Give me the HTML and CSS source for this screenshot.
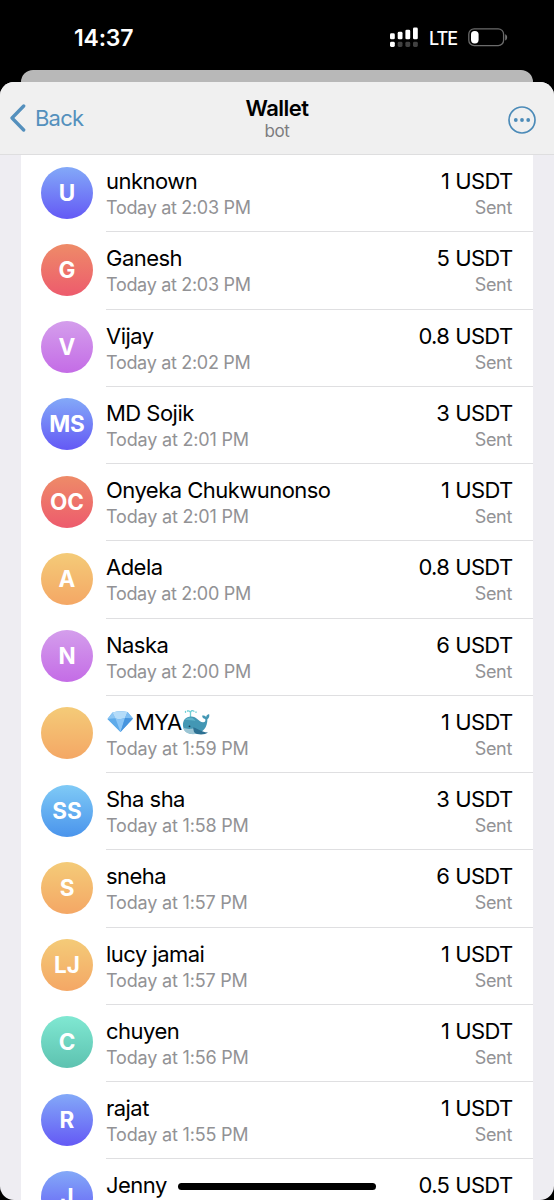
FILE: index.html
```html
<!DOCTYPE html>
<html lang="en">
<head>
<meta charset="utf-8">
<title>Wallet</title>
<link rel="stylesheet" href="styles.css">
</head>
<body>
<div class="phone">
  <header class="status">
    <span class="clock">14:37</span>
    <svg class="signal" width="30" height="22" viewBox="0 0 30 22" fill="#fff">
      <rect x="0" y="7.3" width="4.8" height="6" rx="1.4"/><rect x="7.7" y="5.8" width="4.8" height="7.5" rx="1.4"/><rect x="15.4" y="3.7" width="4.8" height="9.6" rx="1.4"/><rect x="23" y="1.5" width="4.8" height="11.8" rx="1.4"/>
      <rect x="0" y="15.8" width="4.8" height="5.2" rx="1.4"/>
      <g fill="#414141"><rect x="7.7" y="15.8" width="4.8" height="5.2" rx="1.4"/><rect x="15.4" y="15.8" width="4.8" height="5.2" rx="1.4"/><rect x="23" y="15.8" width="4.8" height="5.2" rx="1.4"/></g>
    </svg>
    <span class="network">LTE</span>
    <svg class="battery" width="42" height="20" viewBox="0 0 42 20">
      <rect x="1.8" y="1.8" width="34.8" height="16.8" rx="5.4" fill="none" stroke="#6b6b6b" stroke-width="1.3"/>
      <rect x="4" y="4" width="7.6" height="12.4" rx="3.6" fill="#fff"/>
      <path d="M38.2 7.2c2.6.9 2.6 5.3 0 6.2z" fill="#757575"/>
    </svg>
  </header>
  <div class="backcard"></div>
  <main class="sheet">
    <nav class="nav">
      <a class="back"><svg width="17" height="28" viewBox="0 0 17 28"><path d="M14.7 2 3 14l11.7 12" fill="none" stroke="#5490bd" stroke-width="3.3" stroke-linecap="round" stroke-linejoin="round"/></svg><span>Back</span></a>
      <div class="heading"><h1>Wallet</h1><p>bot</p></div>
      <svg class="more" width="30" height="30" viewBox="0 0 30 30"><circle cx="15" cy="15" r="13" fill="none" stroke="#4c8bb8" stroke-width="1.7"/><g fill="#4c8bb8"><circle cx="8.8" cy="15" r="1.9"/><circle cx="15" cy="15" r="1.9"/><circle cx="21.2" cy="15" r="1.9"/></g></svg>
    </nav>
    <div class="list">
      <div class="row"><div class="avatar indigo">U</div><div class="body"><div><p class="name">unknown</p><p class="sub">Today at 2:03 PM</p></div><div class="end"><p class="amount">1 USDT</p><p class="sub">Sent</p></div></div></div>
      <div class="row"><div class="avatar red">G</div><div class="body"><div><p class="name">Ganesh</p><p class="sub">Today at 2:03 PM</p></div><div class="end"><p class="amount">5 USDT</p><p class="sub">Sent</p></div></div></div>
      <div class="row"><div class="avatar violet">V</div><div class="body"><div><p class="name">Vijay</p><p class="sub">Today at 2:02 PM</p></div><div class="end"><p class="amount">0.8 USDT</p><p class="sub">Sent</p></div></div></div>
      <div class="row"><div class="avatar indigo">MS</div><div class="body"><div><p class="name">MD Sojik</p><p class="sub wide">Today at 2:01 PM</p></div><div class="end"><p class="amount">3 USDT</p><p class="sub">Sent</p></div></div></div>
      <div class="row"><div class="avatar red">OC</div><div class="body"><div><p class="name">Onyeka Chukwunonso</p><p class="sub wide">Today at 2:01 PM</p></div><div class="end"><p class="amount">1 USDT</p><p class="sub">Sent</p></div></div></div>
      <div class="row"><div class="avatar orange">A</div><div class="body"><div><p class="name">Adela</p><p class="sub">Today at 2:00 PM</p></div><div class="end"><p class="amount">0.8 USDT</p><p class="sub">Sent</p></div></div></div>
      <div class="row"><div class="avatar violet">N</div><div class="body"><div><p class="name">Naska</p><p class="sub">Today at 2:00 PM</p></div><div class="end"><p class="amount">6 USDT</p><p class="sub">Sent</p></div></div></div>
      <div class="row"><div class="avatar orange"></div><div class="body"><div><p class="name emoji-name">
        <svg width="29" height="26" viewBox="0 0 29 26"><path d="M6.5 3.5Q14 1.5 21.5 3L27 9.5 14.5 23 1.500 10z" fill="#5ba9ea"/><path d="M6.5 3.5 9.5 9.5 1.5 10z" fill="#8cc6f4"/><path d="M6.5 3.5Q14 1.5 21.5 3L19 9Q14 11 9.5 9.5z" fill="#b5dcf9"/><path d="M21.5 3 27 9.5 19 9z" fill="#7dbdf2"/><path d="M9.5 9.5 14.5 23 1.5 10z" fill="#5fabea"/><path d="M9.5 9.5Q14 11 19 9L14.5 23z" fill="#8ac5f6"/><path d="M19 9 27 9.5 14.5 23z" fill="#4694de"/></svg><span>MYA</span><svg class="whale" width="28" height="28" viewBox="0 0 28 28">
          <g fill="none" stroke="#6fcfd6" stroke-width="1.3" stroke-linecap="round"><path d="M8.5 9V4.5Q7.500 2.500 5.5 3M8.5 4.5Q9.5 1.5 12 3.2"/><path d="M3.5 3.5v.8M14 3.8v.6"/></g>
          <path d="M1 18C.5 12 4 8.500 9 8.5c6 0 7.500 5.500 12 5.800 2.300.1 2.700-1.800 2.200-3.300-2.200-.5-3.200-2-3-3.500 2 0 3.100.4 3.900 1.400.4-1.500 1.400-2.500 3-2.900.6 2.500 0 4-1.700 5.300C25.500 19 21 25.500 13 26 6 26.400 1.500 23.500 1 18z" fill="#4397b4"/>
          <path d="M3 12C5.5 8.500 11 8.500 13.500 13c-3-1-7-1-10.500-1z" fill="#5fb4ca"/>
          <path d="M1.2 19.500c3.500 1.800 8 1.800 10.500.5 1 2.500 2 4.500 3.800 5.500C9 27.500 2 25 1.200 19.500z" fill="#9bc5d4"/>
          <path d="M11 19.500c5 .5 7 4.500 15 5-3 2.500-11 3-14-.5z" fill="#2d7193"/><circle cx="7.5" cy="18.3" r=".9" fill="#163a50"/></svg></p><p class="sub wide">Today at 1:59 PM</p></div><div class="end"><p class="amount">1 USDT</p><p class="sub">Sent</p></div></div></div>
      <div class="row"><div class="avatar blue">SS</div><div class="body"><div><p class="name">Sha sha</p><p class="sub wide">Today at 1:58 PM</p></div><div class="end"><p class="amount">3 USDT</p><p class="sub">Sent</p></div></div></div>
      <div class="row"><div class="avatar orange">S</div><div class="body"><div><p class="name">sneha</p><p class="sub wide">Today at 1:57 PM</p></div><div class="end"><p class="amount">6 USDT</p><p class="sub">Sent</p></div></div></div>
      <div class="row"><div class="avatar orange">LJ</div><div class="body"><div><p class="name">lucy jamai</p><p class="sub wide">Today at 1:57 PM</p></div><div class="end"><p class="amount">1 USDT</p><p class="sub">Sent</p></div></div></div>
      <div class="row"><div class="avatar teal">C</div><div class="body"><div><p class="name">chuyen</p><p class="sub wide">Today at 1:56 PM</p></div><div class="end"><p class="amount">1 USDT</p><p class="sub">Sent</p></div></div></div>
      <div class="row"><div class="avatar indigo">R</div><div class="body"><div><p class="name">rajat</p><p class="sub wide">Today at 1:55 PM</p></div><div class="end"><p class="amount">1 USDT</p><p class="sub">Sent</p></div></div></div>
      <div class="row"><div class="avatar indigo">J</div><div class="body"><div><p class="name">Jenny</p></div><div class="end"><p class="amount">0.5 USDT</p></div></div></div>
    </div>
  </main>
  <div class="home"></div>
</div>
</body>
</html>
```
FILE: styles.css
```css
* { box-sizing: border-box; }
body { margin: 0; background: #000; font-family: Inter, "Liberation Sans", sans-serif; color: #000; }
p, h1 { margin: 0; }
svg { display: block; flex: none; }
.phone { position: relative; width: 554px; height: 1200px; overflow: hidden; display: flex; flex-direction: column; }
.status { height: 69.5px; flex: none; display: flex; align-items: flex-start; color: #fff; padding-left: 74px; }
.clock { width: 316px; font-size: 23px; line-height: 26px; font-weight: 600; padding-top: 25px; letter-spacing: -0.2px; }
.signal { margin-top: 26px; }
.network { width: 38px; margin-left: 9px; font-size: 18px; line-height: 22px; font-weight: 500; padding-top: 28px; letter-spacing: -1px; }
.battery { margin-top: 27px; }
.backcard { height: 12.5px; flex: none; margin: 0 21px; background: #b8b8b8; border-radius: 12px 12px 0 0; }
.sheet { flex: 1; min-height: 0; display: flex; flex-direction: column; overflow: hidden; background: #eeedf2; border-radius: 14px; }
.nav { height: 73px; flex: none; display: grid; grid-template-columns: 1fr auto 1fr; background: #f0f0f0; border-bottom: 1px solid #dededf; }
.back { display: flex; align-items: center; gap: 9px; padding-left: 9px; color: #5490bd; font-size: 22px; letter-spacing: -0.8px; }
.heading { text-align: center; padding-top: 12px; }
.heading h1 { font-size: 22px; line-height: 28px; font-weight: 600; letter-spacing: -0.5px; }
.heading p { font-size: 17px; line-height: 19px; color: #7d7d7f; letter-spacing: -0.4px; }
.more { justify-self: end; align-self: center; margin: 3px 17px 0 0; }
.list { margin: 0 21px; background: #fff; flex: none; }
.row { height: 77.25px; display: flex; padding-left: 20px; gap: 13px; }
.avatar { width: 52px; height: 52px; flex: none; margin-top: 11.5px; border-radius: 50%; color: #fff; font-size: 22.5px; font-weight: 700; line-height: 52px; text-align: center; }
.body { flex: 1; display: flex; justify-content: space-between; padding: 12.2px 21px 0 0; border-bottom: 1px solid #dfdfe1; }
.name, .amount { font-size: 22px; line-height: 28px; letter-spacing: -0.53px; white-space: nowrap; }
.amount { letter-spacing: -0.65px; word-spacing: 0.4px; margin-right: -0.5px; }
.sub { font-size: 18px; line-height: 25px; color: #929295; letter-spacing: -0.31px; white-space: nowrap; }
.wide { letter-spacing: -0.18px; }
.end { text-align: right; }
.emoji-name { display: flex; align-items: center; height: 28px; }
.whale { margin-left: 0.5px; }
.indigo { background: linear-gradient(#83a9f8, #6459f5); }
.red { background: linear-gradient(#ee8b68, #ed5b6d); }
.violet { background: linear-gradient(#d49eec, #c46ce6); }
.orange { background: linear-gradient(#f4cb78, #f4a765); }
.blue { background: linear-gradient(#7fcaf6, #4a94ec); }
.teal { background: linear-gradient(#80e8d2, #5dc2b0); }
.home { position: absolute; left: 178px; top: 1183px; width: 198px; height: 6.5px; border-radius: 4px; background: #000; }
```
